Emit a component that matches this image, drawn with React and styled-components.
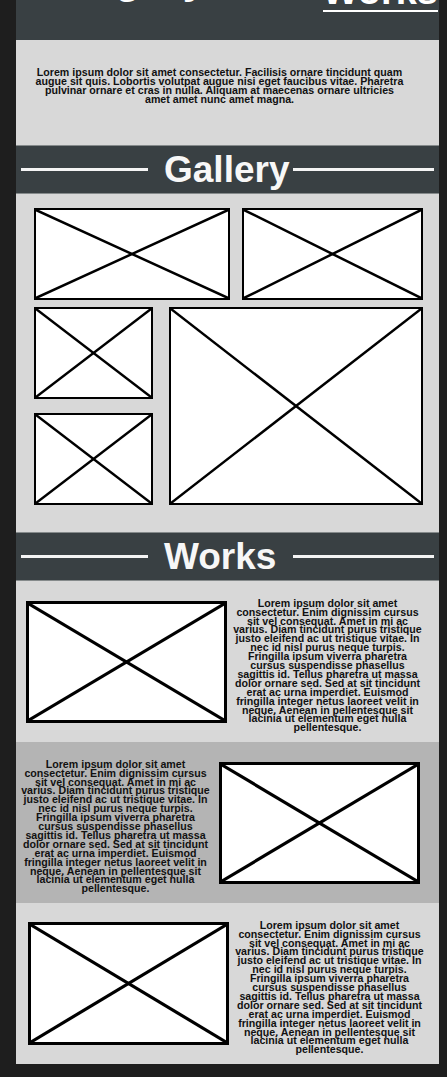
import React from 'react';
import styled, { createGlobalStyle } from 'styled-components';

const LOREM =
  'Lorem ipsum dolor sit amet consectetur. Enim dignissim cursus sit vel consequat. Amet in mi ac varius. Diam tincidunt purus tristique justo eleifend ac ut tristique vitae. In nec id nisl purus neque turpis. Fringilla ipsum viverra pharetra cursus suspendisse phasellus sagittis id. Tellus pharetra ut massa dolor ornare sed. Sed at sit tincidunt erat ac urna imperdiet. Euismod fringilla integer netus laoreet velit in neque. Aenean in pellentesque sit lacinia ut elementum eget nulla pellentesque.';

function Placeholder({ w, h, border = 2, line = 2.5 }) {
    return (
        <Frame $w={w} $h={h} $border={border}>
            <svg viewBox="0 0 100 100" preserveAspectRatio="none">
                <line x1="0" y1="0" x2="100" y2="100" strokeWidth={line} vectorEffect="non-scaling-stroke" />
                <line x1="0" y1="100" x2="100" y2="0" strokeWidth={line} vectorEffect="non-scaling-stroke" />
            </svg>
        </Frame>
    );
}

function SectionHeading({ children }) {
    return (
        <HeadingBar>
            <Rule />
            <HeadingTitle>{children}</HeadingTitle>
            <Rule />
        </HeadingBar>
    );
}

function App() {
    return (
        <>
            <GlobalStyle />
            <Page>
                <TopBar>
                    <SiteTitle>Category</SiteTitle>
                    <NavLink href="#works">Works</NavLink>
                </TopBar>

                <Intro>
                    <p>
                        Lorem ipsum dolor sit amet consectetur. Facilisis ornare tincidunt quam
                        augue sit quis. Lobortis volutpat augue nisi eget faucibus vitae. Pharetra
                        pulvinar ornare et cras in nulla. Aliquam at maecenas ornare ultricies
                        amet amet nunc amet magna.
                    </p>
                </Intro>

                <SectionHeading>Gallery</SectionHeading>
                <Gallery>
                    <GalleryRow>
                        <Placeholder w="196px" h="92px" />
                        <Placeholder w="181px" h="92px" />
                    </GalleryRow>
                    <GalleryRow>
                        <GalleryStack>
                            <Placeholder w="119px" h="92px" />
                            <Placeholder w="119px" h="92px" />
                        </GalleryStack>
                        <Placeholder w="254px" h="198px" />
                    </GalleryRow>
                </Gallery>

                <SectionHeading>Works</SectionHeading>
                <WorkRow $pad="0 17px 0 10px">
                    <Placeholder w="201px" h="122px" border={3} line={3.2} />
                    <WorkText>{LOREM}</WorkText>
                </WorkRow>
                <WorkRow $shade $pad="0 19px 0 5px">
                    <WorkText>{LOREM}</WorkText>
                    <Placeholder w="201px" h="122px" border={3} line={3.2} />
                </WorkRow>
                <WorkRow $pad="0 15px 0 12px">
                    <Placeholder w="201px" h="123px" border={3} line={3.2} />
                    <WorkText>{LOREM}</WorkText>
                </WorkRow>
            </Page>
        </>
    );
}

const GlobalStyle = createGlobalStyle`
body{
    margin: 0;
    background-color: #1e1e1e;
    font-family: "Liberation Sans", Arial, sans-serif;
}
`;

const Page = styled.div`
margin-left: 16px;
width: 423px;
`;

const TopBar = styled.header`
height: 40px;
overflow: hidden;
display: flex;
justify-content: space-between;
align-items: flex-start;
padding: 0 1px 0 8px;
box-sizing: border-box;
background-color: #394043;
color: #fff;
`;

const SiteTitle = styled.h1`
margin: -42px 0 0 0;
font-size: 42px;
line-height: 1;
font-weight: 700;
`;

const NavLink = styled.a`
margin-top: -28px;
font-size: 38px;
line-height: 1;
font-weight: 700;
color: #fff;
text-decoration: none;
border-bottom: 2px solid #fff;
`;

const Intro = styled.section`
background-color: #d8d8d8;
padding: 28px 0 0 19px;
height: 105px;
box-sizing: border-box;
p{
    margin: 0;
    width: 369px;
    text-align: center;
    font-size: 10.65px;
    line-height: 8.9px;
    font-weight: 700;
    color: #111;
}
`;

const HeadingBar = styled.div`
display: grid;
grid-template-columns: 127px 145px 1fr;
align-items: center;
height: 47px;
padding: 0 5px;
background-color: #394043;
border-top: 1px solid #858a8b;
border-bottom: 1px solid #858a8b;
`;

const Rule = styled.span`
display: block;
height: 3px;
background-color: #f4f4f4;
`;

const HeadingTitle = styled.h2`
margin: 0;
padding-left: 16px;
font-size: 37px;
line-height: 1;
font-weight: 700;
color: #f7f7f7;
white-space: nowrap;
`;

const Gallery = styled.section`
display: flex;
flex-direction: column;
gap: 7px;
padding: 14px 16px 27px 18px;
background-color: #d8d8d8;
`;

const GalleryRow = styled.div`
display: flex;
justify-content: space-between;
align-items: flex-start;
`;

const GalleryStack = styled.div`
display: flex;
flex-direction: column;
gap: 14px;
`;

const Frame = styled.div`
flex: none;
width: ${p => p.$w};
height: ${p => p.$h};
box-sizing: border-box;
border: ${p => p.$border}px solid #000;
background-color: #fff;
svg{
    display: block;
    width: 100%;
    height: 100%;
    stroke: #000;
}
`;

const WorkRow = styled.section`
display: flex;
align-items: center;
justify-content: space-between;
padding: ${p => p.$pad};
min-height: 161px;
box-sizing: border-box;
background-color: ${p => (p.$shade ? '#b4b4b4' : '#d8d8d8')};
`;

const WorkText = styled.p`
margin: 0;
padding-top: 8px;
width: 189px;
text-align: center;
font-size: 10.65px;
line-height: 8.9px;
font-weight: 700;
color: #111;
`;

export default App
